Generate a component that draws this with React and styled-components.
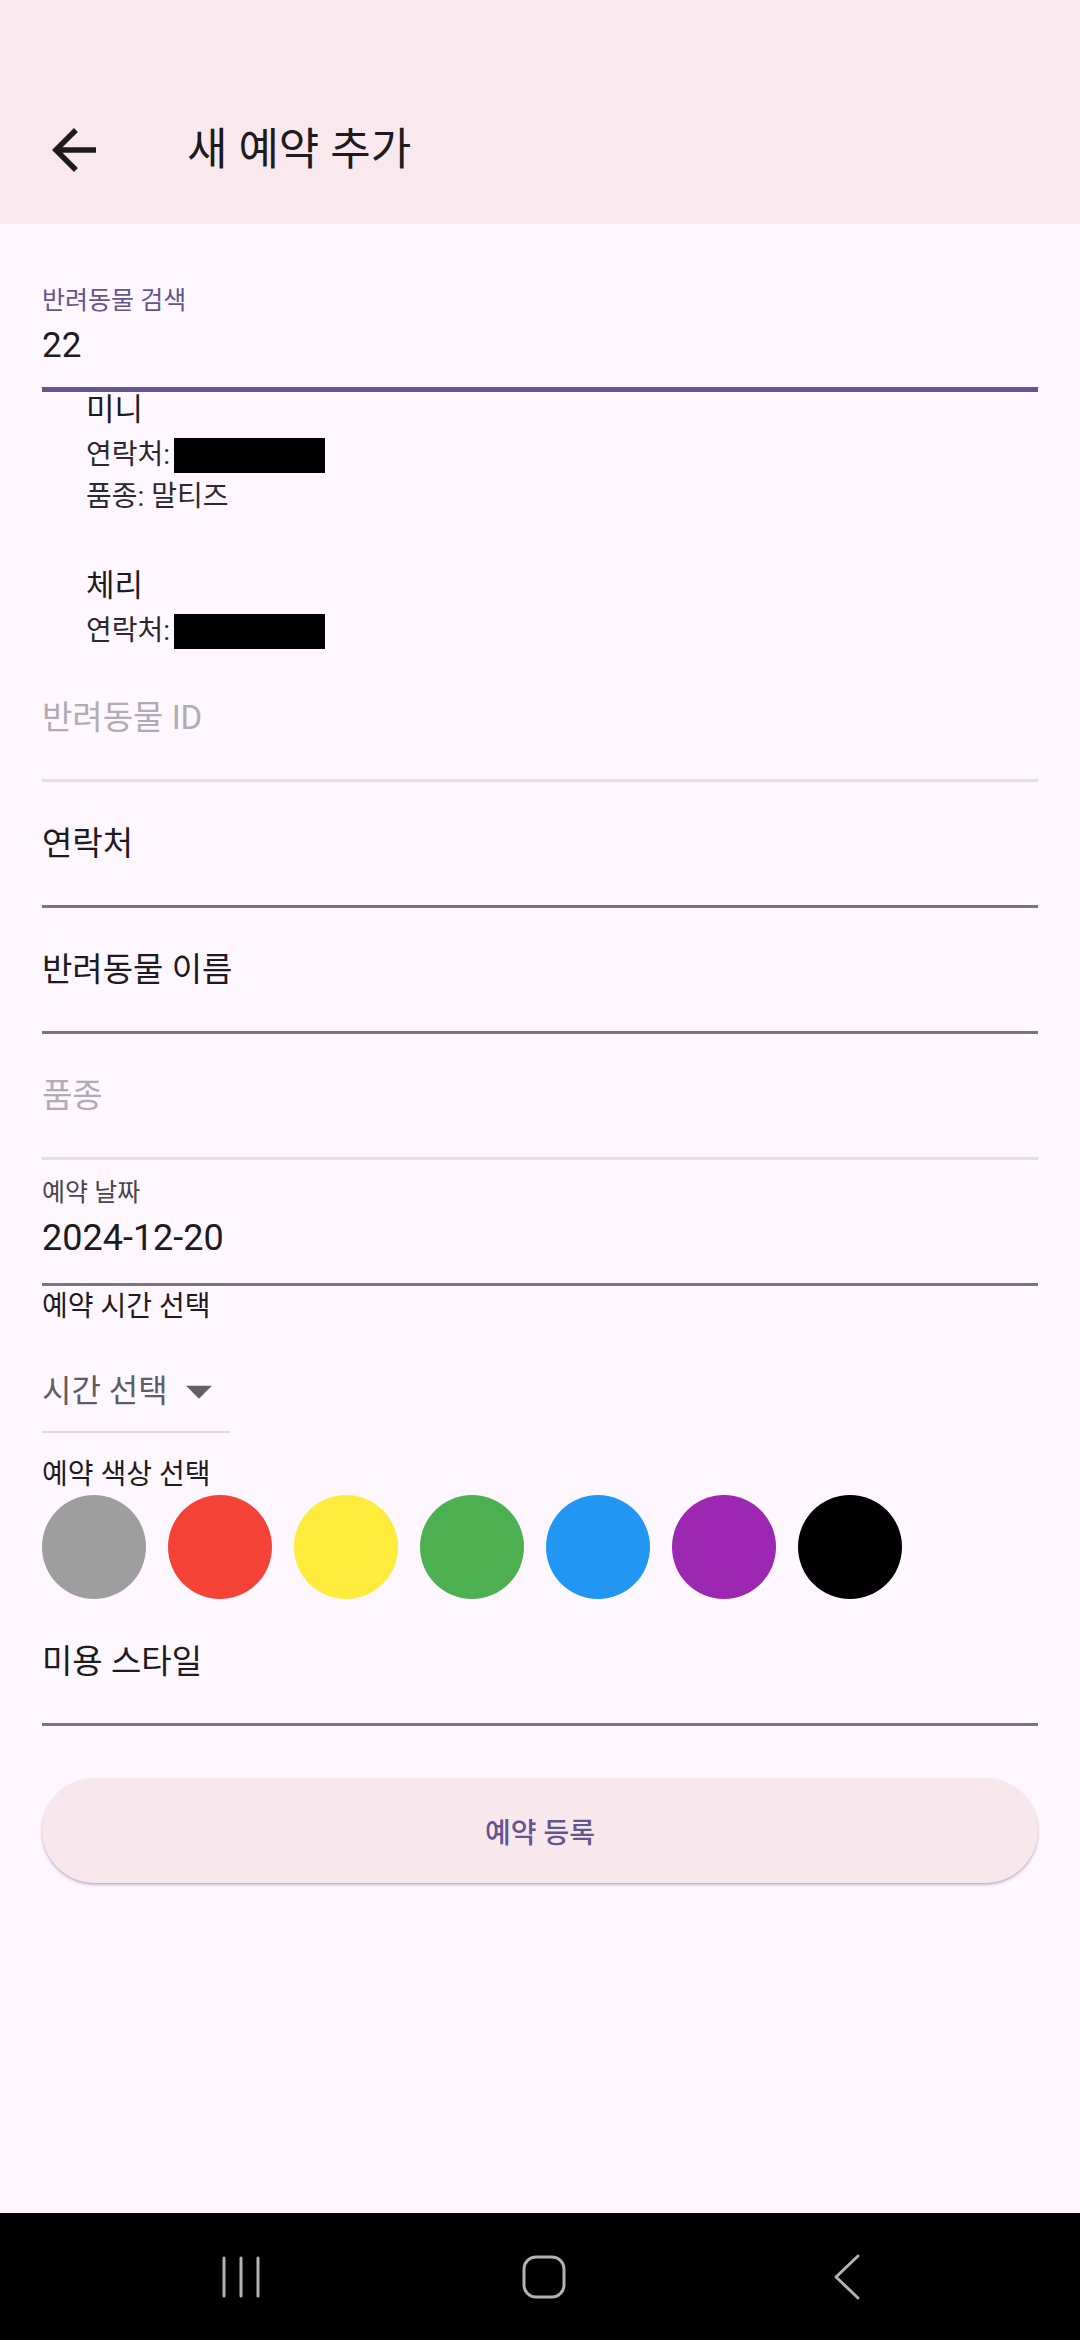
import React from 'react'
import styled, { createGlobalStyle } from 'styled-components'

const GlobalStyle = createGlobalStyle`
  html, body {
    margin: 0;
    padding: 0;
    background: #fef7ff;
  }
  body {
    font-family: Roboto, "Noto Sans CJK KR", sans-serif;
    color: #1d1b20;
  }
`

const Screen = styled.div`
  min-height: 2340px;
  display: flex;
  flex-direction: column;
  background: #fef7ff;
`

const AppBar = styled.header`
  height: 224px;
  box-sizing: border-box;
  padding: 76px 0 0 41px;
  display: flex;
  align-items: center;
  background: #f9e8ed;
`

const BackButton = styled.svg`
  width: 66px;
  height: 66px;
  fill: #1d1b20;
  flex-shrink: 0;
`

const Title = styled.h1`
  margin: 0 0 0 80px;
  font-size: 44px;
  font-weight: 400;
  line-height: 56px;
  color: #1d1b20;
`

const Form = styled.main`
  padding: 44px 42px 0;
  display: flex;
  flex-direction: column;
`

const Field = styled.div`
  box-sizing: border-box;
  height: ${p => (p.$focused ? 124 : 126)}px;
  padding-top: ${p => (p.$floating ? 18 : 42)}px;
  margin-top: ${p => p.$offset || 0}px;
  border-bottom: ${p => (p.$focused ? '5px solid #65558f' : p.$disabled ? '3px solid #e4dfe7' : '3px solid #79747e')};
`

const FloatLabel = styled.div`
  font-size: 25px;
  line-height: 30px;
  color: ${p => (p.$focused ? '#65558f' : '#49454f')};
`

const FieldValue = styled.div`
  margin-top: 8px;
  font-size: ${p => p.$size || 35}px;
  line-height: 44px;
  color: #1d1b20;
`

const FieldText = styled.div`
  font-size: ${p => p.$size || 33}px;
  line-height: 40px;
  color: ${p => (p.$disabled ? '#b1acb4' : '#1d1b20')};
`

const SuggestionList = styled.div`
  display: flex;
  flex-direction: column;
  gap: 52px;
  padding: 0 0 6px 44px;
`

const Suggestion = styled.div`
  display: flex;
  flex-direction: column;
`

const PetName = styled.div`
  font-size: 31px;
  line-height: 36px;
  color: #1d1b20;
`

const PetDetail = styled.div`
  display: flex;
  align-items: center;
  margin-top: ${p => p.$gap}px;
  font-size: 28px;
  line-height: 38px;
  color: #2b292e;
`

const Redacted = styled.span`
  display: inline-block;
  width: 151px;
  height: 35px;
  margin-left: 4px;
  background: #000;
`

const SectionLabel = styled.div`
  margin-top: ${p => p.$gap}px;
  font-size: 28px;
  line-height: 34px;
  color: #1d1b20;
`

const Dropdown = styled.div`
  align-self: flex-start;
  display: flex;
  align-items: center;
  padding: 47px 0 20px;
  border-bottom: 2px solid #ddd8df;
`

const DropdownText = styled.span`
  font-size: 32px;
  line-height: 40px;
  color: #605c64;
`

const DropIcon = styled.svg`
  width: 62px;
  height: 62px;
  margin: -11px 0;
  fill: #616064;
`

const ColorRow = styled.div`
  display: flex;
  gap: 22px;
  margin-top: 3px;
`

const Swatch = styled.div`
  width: 104px;
  height: 104px;
  border-radius: 50%;
  background: ${p => p.$color};
`

const SubmitButton = styled.button`
  margin-top: 52px;
  height: 105px;
  border: none;
  border-radius: 53px;
  background: #f8e8ee;
  box-shadow: 0 2px 3px rgba(60, 40, 60, 0.25), 0 1px 1px rgba(60, 40, 60, 0.12);
  font-family: Roboto, "Noto Sans CJK KR", sans-serif;
  font-size: 28px;
  font-weight: 500;
  color: #65558f;
`

const NavBar = styled.nav`
  margin-top: auto;
  height: 127px;
  background: #000;
  display: flex;
  align-items: center;
  padding-left: 181px;
  gap: 183px;
`

const NavSlot = styled.div`
  width: 120px;
  display: flex;
  justify-content: center;
`

const NavIcon = styled.svg`
  stroke: #b2b2b2;
  fill: none;
  stroke-width: 3;
  stroke-linecap: round;
  stroke-linejoin: round;
`

const swatches = ['#9e9e9e', '#f44336', '#ffeb3b', '#4caf50', '#2196f3', '#9c27b0', '#000000']

export default function App() {
  return (
    <Screen>
      <GlobalStyle />
      <AppBar>
        <BackButton viewBox="0 0 24 24">
          <path d="M20 11H7.83l5.59-5.59L12 4l-8 8 8 8 1.41-1.41L7.83 13H20v-2z" />
        </BackButton>
        <Title>새 예약 추가</Title>
      </AppBar>

      <Form>
        <Field $focused $floating>
          <FloatLabel $focused>반려동물 검색</FloatLabel>
          <FieldValue>22</FieldValue>
        </Field>

        <SuggestionList>
          <Suggestion>
            <PetName>미니</PetName>
            <PetDetail $gap={8}>연락처: <Redacted /></PetDetail>
            <PetDetail $gap={4}>품종: 말티즈</PetDetail>
          </Suggestion>
          <Suggestion>
            <PetName>체리</PetName>
            <PetDetail $gap={8}>연락처: <Redacted /></PetDetail>
          </Suggestion>
        </SuggestionList>

        <Field $disabled>
          <FieldText $disabled $size={33}>반려동물 ID</FieldText>
        </Field>
        <Field>
          <FieldText>연락처</FieldText>
        </Field>
        <Field>
          <FieldText>반려동물 이름</FieldText>
        </Field>
        <Field $disabled>
          <FieldText $disabled>품종</FieldText>
        </Field>
        <Field $floating>
          <FloatLabel>예약 날짜</FloatLabel>
          <FieldValue $size={36}>2024-12-20</FieldValue>
        </Field>

        <SectionLabel $gap={4}>예약 시간 선택</SectionLabel>
        <Dropdown>
          <DropdownText>시간 선택</DropdownText>
          <DropIcon viewBox="0 0 24 24">
            <path d="M7 10l5 5 5-5z" />
          </DropIcon>
        </Dropdown>

        <SectionLabel $gap={25}>예약 색상 선택</SectionLabel>
        <ColorRow>
          {swatches.map(c => (
            <Swatch key={c} $color={c} />
          ))}
        </ColorRow>

        <Field $offset={1}>
          <FieldText>미용 스타일</FieldText>
        </Field>

        <SubmitButton>예약 등록</SubmitButton>
      </Form>

      <NavBar>
        <NavSlot>
          <NavIcon width="40" height="42" viewBox="0 0 40 42">
            <path d="M3 2v38M20 2v38M37 2v38" />
          </NavIcon>
        </NavSlot>
        <NavSlot>
          <NavIcon width="44" height="44" viewBox="0 0 44 44">
            <rect x="2" y="2" width="40" height="40" rx="12" />
          </NavIcon>
        </NavSlot>
        <NavSlot>
          <NavIcon width="28" height="46" viewBox="0 0 28 46">
            <path d="M25 2L3 23l22 21" />
          </NavIcon>
        </NavSlot>
      </NavBar>
    </Screen>
  )
}
